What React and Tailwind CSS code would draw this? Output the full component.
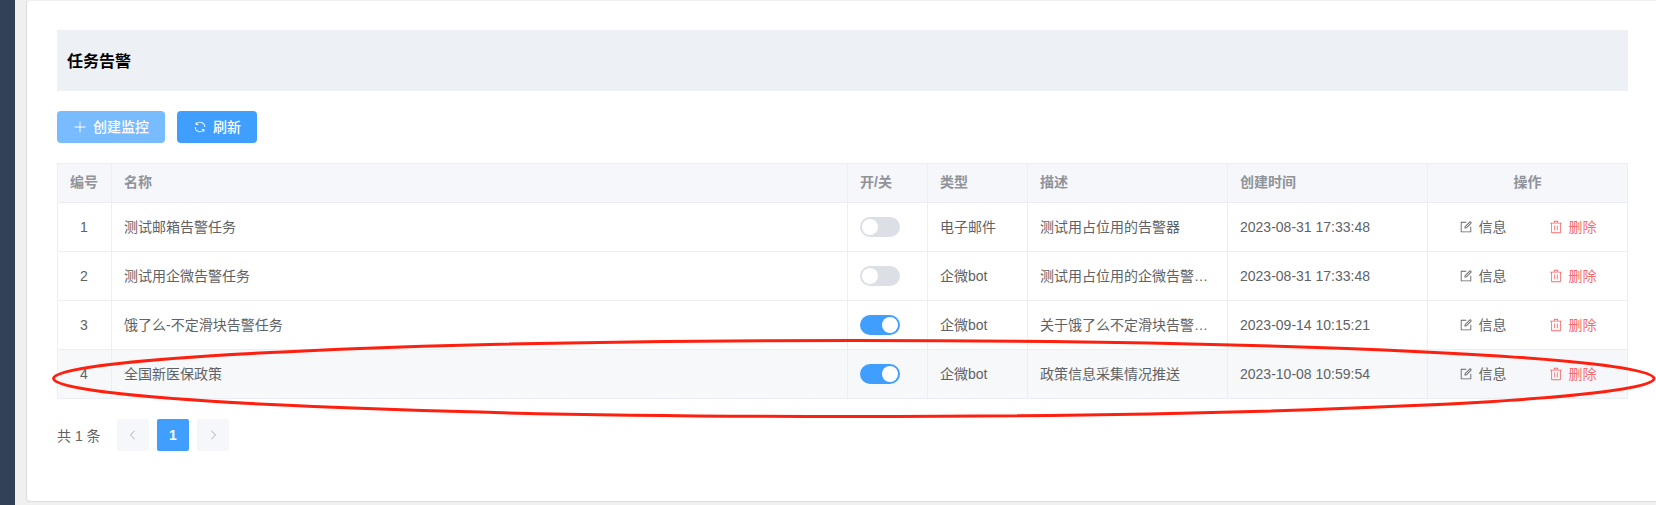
import React from 'react';

const PATHS = {
  plus: ['M480 480V128a32 32 0 0 1 64 0v352h352a32 32 0 1 1 0 64H544v352a32 32 0 1 1-64 0V544H128a32 32 0 0 1 0-64h352z'],
  refresh: ['M771.776 794.88A384 384 0 0 1 128 512h64a320 320 0 0 0 555.712 216.448H654.72a32 32 0 1 1 0-64h149.056a32 32 0 0 1 32 32v148.928a32 32 0 1 1-64 0v-50.56zM276.288 295.616h92.992a32 32 0 0 1 0 64H220.16a32 32 0 0 1-32-32V178.56a32 32 0 0 1 64 0v50.56A384 384 0 0 1 896.128 512h-64a320 320 0 0 0-555.776-216.384z'],
  edit: [
    'M832 512a32 32 0 1 1 64 0v352a32 32 0 0 1-32 32H160a32 32 0 0 1-32-32V160a32 32 0 0 1 32-32h352a32 32 0 0 1 0 64H192v640h640V512z',
    'm469.952 554.24 52.8-7.552L847.104 222.4a32 32 0 1 0-45.248-45.248L477.44 501.44l-7.552 52.8zm422.4-422.4a96 96 0 0 1 0 135.808l-331.84 331.84a32 32 0 0 1-18.112 9.088L436.8 623.68a32 32 0 0 1-36.224-36.224l15.104-105.6a32 32 0 0 1 9.024-18.112l331.904-331.84a96 96 0 0 1 135.744 0z',
  ],
  trash: ['M160 256H96a32 32 0 0 1 0-64h256V95.936a32 32 0 0 1 32-32h256a32 32 0 0 1 32 32V192h256a32 32 0 1 1 0 64h-64v672a32 32 0 0 1-32 32H192a32 32 0 0 1-32-32V256zm448-64v-64H416v64h192zM224 896h576V256H224v640zm192-128a32 32 0 0 1-32-32V416a32 32 0 0 1 64 0v320a32 32 0 0 1-32 32zm192 0a32 32 0 0 1-32-32V416a32 32 0 0 1 64 0v320a32 32 0 0 1-32 32z'],
  left: ['M609.408 149.376 277.76 489.6a32 32 0 0 0 0 44.672l331.648 340.352a29.12 29.12 0 0 0 41.728 0 30.592 30.592 0 0 0 0-42.752L339.264 511.936l311.872-319.872a30.592 30.592 0 0 0 0-42.688 29.12 29.12 0 0 0-41.728 0z'],
};

function Icon({ name, className = 'size-3.5' }) {
  return (
    <svg viewBox="0 0 1024 1024" fill="currentColor" className={`shrink-0 ${className}`}>
      {PATHS[name].map((d) => <path key={d} d={d} />)}
    </svg>
  );
}

function Switch({ on }) {
  return (
    <span className={`flex h-5 w-10 items-center rounded-full px-0.5 ${on ? 'justify-end bg-[#409eff]' : 'justify-start bg-[#dcdfe6]'}`}>
      <span className="size-4 rounded-full bg-white" />
    </span>
  );
}

const COLS = 'grid grid-cols-[54px_736px_80px_100px_200px_200px_200px]';
const CELL = 'flex min-w-0 items-center border-r border-b border-[#ebeef5]';

const ROWS = [
  { id: 1, name: '测试邮箱告警任务', on: false, type: '电子邮件', desc: '测试用占位用的告警器', time: '2023-08-31 17:33:48' },
  { id: 2, name: '测试用企微告警任务', on: false, type: '企微bot', desc: '测试用占位用的企微告警…', time: '2023-08-31 17:33:48' },
  { id: 3, name: '饿了么-不定滑块告警任务', on: true, type: '企微bot', desc: '关于饿了么不定滑块告警…', time: '2023-09-14 10:15:21' },
  { id: 4, name: '全国新医保政策', on: true, type: '企微bot', desc: '政策信息采集情况推送', time: '2023-10-08 10:59:54', active: true },
];

function Row({ row }) {
  return (
    <div className={`h-[49px] ${COLS} ${row.active ? 'bg-[#f6f8fa]' : 'bg-white'}`}>
      <div className={`${CELL} justify-center pr-px`}>{row.id}</div>
      <div className={`${CELL} px-3`}>{row.name}</div>
      <div className={`${CELL} px-3`}><Switch on={row.on} /></div>
      <div className={`${CELL} px-3`}>{row.type}</div>
      <div className={`${CELL} px-3 whitespace-nowrap`}>{row.desc}</div>
      <div className={`${CELL} px-3`}>{row.time}</div>
      <div className={`${CELL} justify-center gap-[42px] px-3 ${row.active ? 'bg-[#f5f7fa]' : ''}`}>
        <span className="flex items-center gap-1.5"><Icon name="edit" />信息</span>
        <span className="flex items-center gap-1.5 text-[#f56c6c]"><Icon name="trash" />删除</span>
      </div>
    </div>
  );
}

export default function App() {
  return (
    <div className="relative flex h-[505px] w-[1656px] overflow-hidden bg-[#f0f0f0] font-['Liberation_Sans','Noto_Sans_CJK_SC',sans-serif] text-sm leading-[23px] text-[#606266]">
      <aside className="w-[15px] shrink-0 bg-[#334157]" />
      <main className="mb-[3px] ml-[11px] flex-1 rounded-l border-y border-l border-[#dcdcdc] border-t-[#f0f0f0] bg-white pt-[29px] pl-[30px]">
        <header className="flex h-[61px] w-[1571px] items-center bg-[#edf1f6] pt-0.5 pl-2.5 text-base font-bold text-black">
          任务告警
        </header>
        <div className="mt-5 flex gap-3 font-medium text-white">
          <button className="flex h-8 w-27 items-center justify-center gap-1.5 rounded bg-[#79bbff]"><Icon name="plus" />创建监控</button>
          <button className="flex h-8 w-20 items-center justify-center gap-1.5 rounded bg-[#409eff]"><Icon name="refresh" />刷新</button>
        </div>
        <section className="mt-5 w-[1571px] border-t border-l border-[#ebeef5]">
          <div className={`h-[39px] bg-[#f5f7fa] font-bold text-[#909399] *:pb-0.5 ${COLS}`}>
            <div className={`${CELL} justify-center pr-px`}>编号</div>
            <div className={`${CELL} px-3`}>名称</div>
            <div className={`${CELL} px-3`}>开/关</div>
            <div className={`${CELL} px-3`}>类型</div>
            <div className={`${CELL} px-3`}>描述</div>
            <div className={`${CELL} px-3`}>创建时间</div>
            <div className={`${CELL} justify-center px-3`}>操作</div>
          </div>
          {ROWS.map((r) => <Row key={r.id} row={r} />)}
        </section>
        <nav className="mt-5 flex items-center gap-2">
          <span className="mr-2 w-11 pt-0.5">共 1 条</span>
          <button className="flex size-8 items-center justify-center rounded-xs bg-[#f5f7fa] text-[#a8abb2]"><Icon name="left" className="size-3" /></button>
          <button className="flex size-8 items-center justify-center rounded-xs bg-[#409eff] font-bold text-white">1</button>
          <button className="flex size-8 items-center justify-center rounded-xs bg-[#f5f7fa] text-[#a8abb2]"><Icon name="left" className="size-3 rotate-180" /></button>
        </nav>
      </main>
      <svg className="pointer-events-none absolute inset-0 h-full w-full" viewBox="0 0 1656 505" fill="none">
        <ellipse cx="853.8" cy="378.5" rx="800.3" ry="38" stroke="#ff1f0f" strokeWidth="3" />
      </svg>
    </div>
  );
}
